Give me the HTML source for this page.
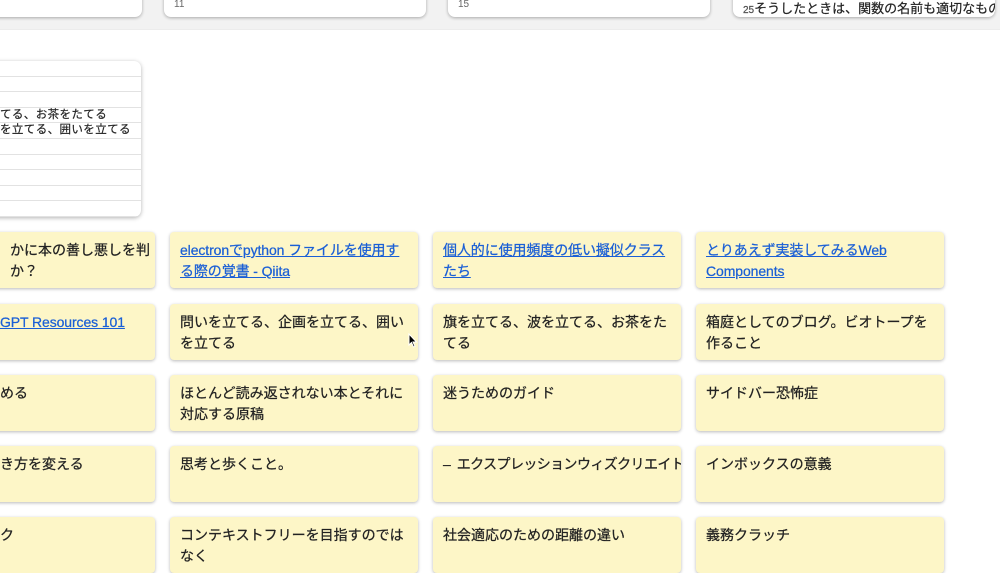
<!DOCTYPE html>
<html><head><meta charset="utf-8"><style>
*{margin:0;padding:0;box-sizing:border-box}
body{width:1000px;height:572px;overflow:hidden;background:#fff;position:relative;font-family:"Liberation Sans","Noto Sans CJK JP",sans-serif}
.strip{position:absolute;left:0;top:0;width:1000px;height:30px;background:#f2f2f2;border-bottom:1px solid #ececec}
.tc{position:absolute;top:-10px;height:27px;background:#fff;border-radius:0 0 7px 7px;box-shadow:0 1px 3px rgba(0,0,0,.3);font-size:10px;color:#666;padding:9px 0 0 10px;overflow:hidden}
.big{position:absolute;left:-20px;top:61px;width:161px;height:156px;background:#fff;border-radius:7px;box-shadow:0 1px 4px rgba(0,0,0,.3);overflow:hidden}
.big div{height:15.6px;border-bottom:1px solid #e2e2e2;font-size:11.5px;color:#222;white-space:nowrap;line-height:15px;letter-spacing:.4px;-webkit-text-stroke:.2px #222}
.c{position:absolute;width:248px;height:56px;background:#fdf6c7;border-radius:4px;box-shadow:0 1px 3px rgba(0,0,0,.28);font-size:14px;line-height:21px;color:#222;padding:8px 0 7px 10px;overflow:hidden;white-space:nowrap;letter-spacing:0;-webkit-text-stroke:.25px #222}
.c a{color:#1a5fd6;text-decoration:underline;-webkit-text-stroke:.25px #1a5fd6;letter-spacing:-.1px}
</style></head><body>
<div class="strip"></div>
<div class="tc" style="left:-120px;width:262px"></div>
<div class="tc" style="left:164px;width:262px">11</div>
<div class="tc" style="left:448px;width:262px">15</div>
<div class="tc" style="left:733px;width:262px;padding-top:10px;font-size:13px;color:#222;line-height:17px;white-space:nowrap;letter-spacing:0;-webkit-text-stroke:.2px #222"><span style="font-size:10px;color:#666">25</span>そうしたときは、関数の名前も適切なものが<br>すぐに付けられる。ところで、すでに存在し</div>
<div class="big">
<div></div><div></div><div></div>
<div style="padding-left:20px">てる、お茶をたてる</div>
<div style="padding-left:20px">を立てる、囲いを立てる</div>
<div></div><div></div><div></div><div></div><div></div>
</div>

<div class="c" style="left:-93px;top:232px;padding-left:103px">かに本の善し悪しを判<br>か？</div>
<div class="c" style="left:170px;top:232px"><a>electronでpython ファイルを使用す</a><br><a>る際の覚書 - Qiita</a></div>
<div class="c" style="left:433px;top:232px"><a>個人的に使用頻度の低い擬似クラス</a><br><a>たち</a></div>
<div class="c" style="left:696px;top:232px"><a>とりあえず実装してみるWeb</a><br><a>Components</a></div>

<div class="c" style="left:-93px;top:304px;padding-left:93px"><a>GPT Resources 101</a></div>
<div class="c" style="left:170px;top:304px">問いを立てる、企画を立てる、囲い<br>を立てる</div>
<div class="c" style="left:433px;top:304px">旗を立てる、波を立てる、お茶をた<br>てる</div>
<div class="c" style="left:696px;top:304px">箱庭としてのブログ。ビオトープを<br>作ること</div>

<div class="c" style="left:-93px;top:375px;padding-left:93px">める</div>
<div class="c" style="left:170px;top:375px">ほとんど読み返されない本とそれに<br>対応する原稿</div>
<div class="c" style="left:433px;top:375px">迷うためのガイド</div>
<div class="c" style="left:696px;top:375px">サイドバー恐怖症</div>

<div class="c" style="left:-93px;top:446px;padding-left:93px">き方を変える</div>
<div class="c" style="left:170px;top:446px">思考と歩くこと。</div>
<div class="c" style="left:433px;top:446px;letter-spacing:-.6px">–&nbsp; エクスプレッションウィズクリエイト</div>
<div class="c" style="left:696px;top:446px">インボックスの意義</div>

<div class="c" style="left:-93px;top:517px;padding-left:93px">ク</div>
<div class="c" style="left:170px;top:517px">コンテキストフリーを目指すのでは<br>なく</div>
<div class="c" style="left:433px;top:517px">社会適応のための距離の違い</div>
<div class="c" style="left:696px;top:517px">義務クラッチ</div>

<svg style="position:absolute;left:408px;top:333px" width="10" height="15" viewBox="0 0 10 15"><path d="M1 1 L1 12 L3.5 9.5 L5.5 14 L7 13.3 L5 9 L8.5 9 Z" fill="#000" stroke="#fff" stroke-width="1"/></svg>
</body></html>
